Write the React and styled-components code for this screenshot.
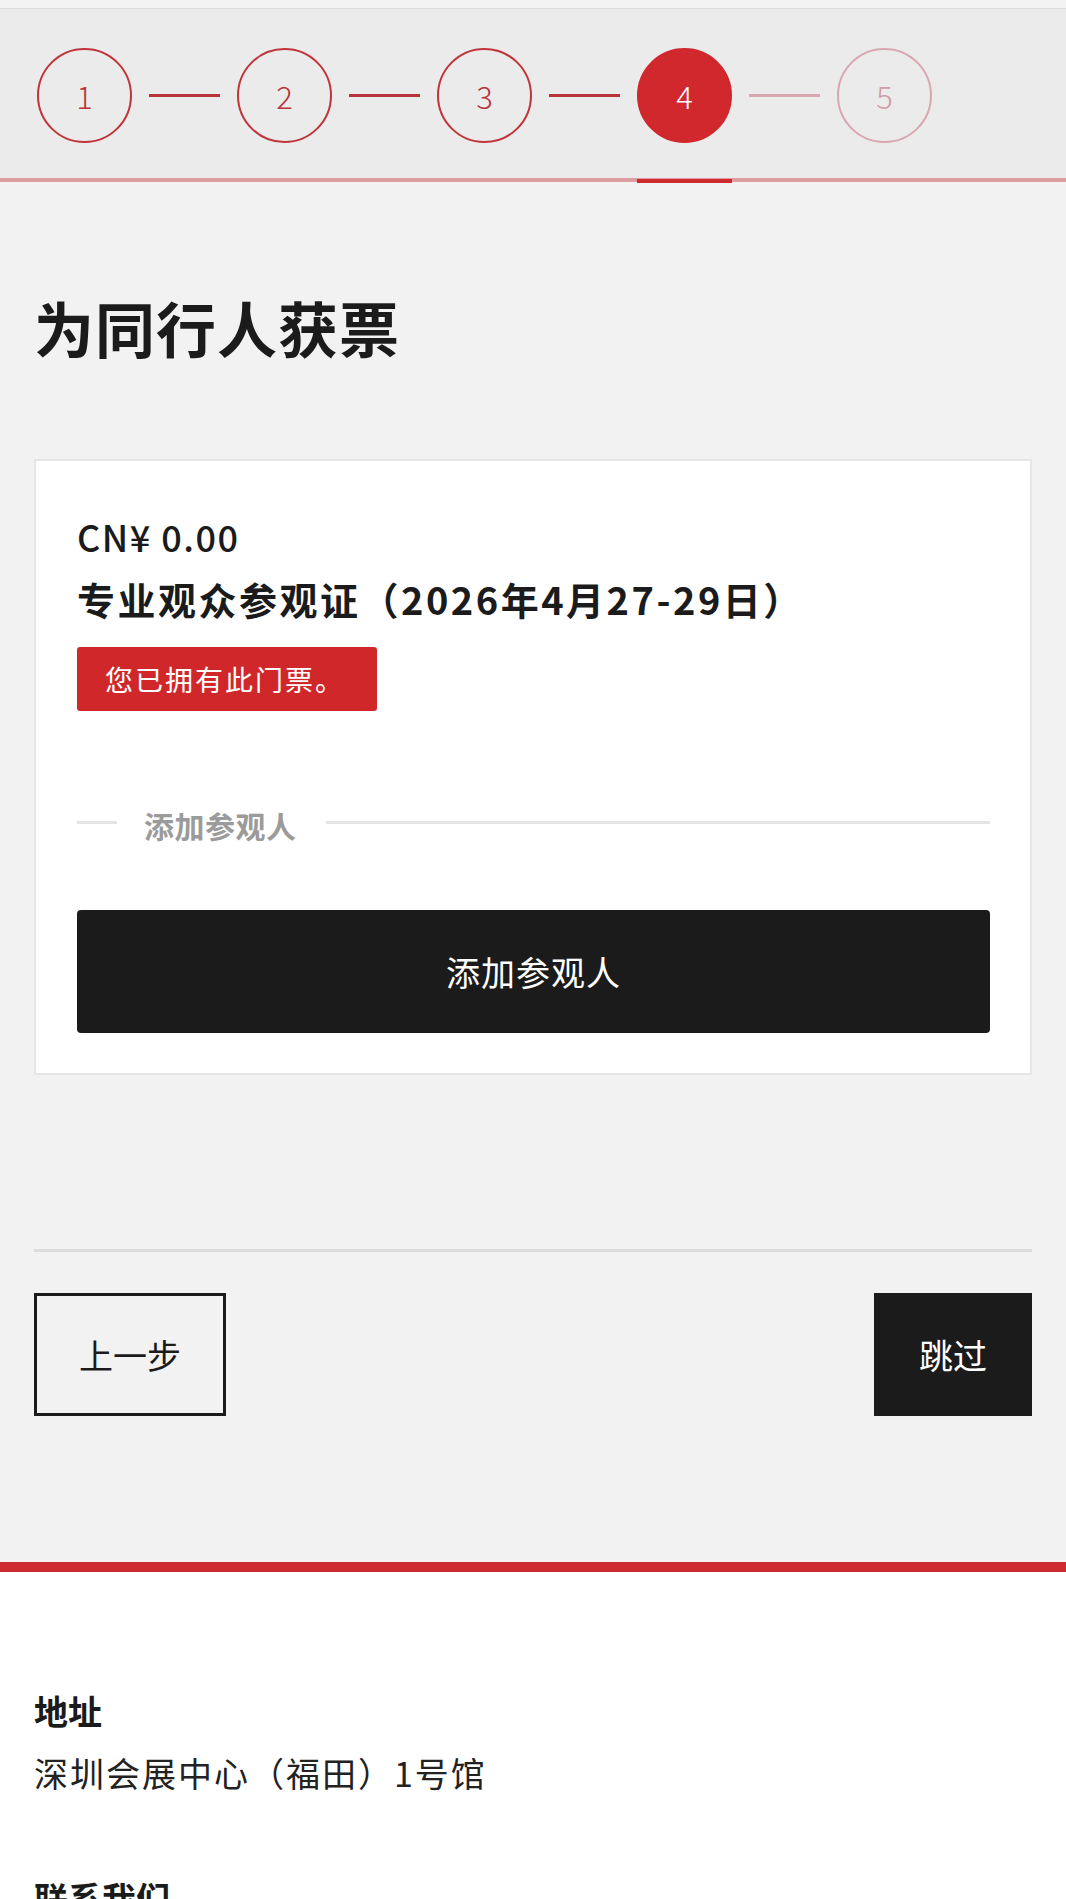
import React from 'react';
import styled, { createGlobalStyle, css } from 'styled-components';

const GlobalStyle = createGlobalStyle`
  body {
    margin: 0;
    background: #f2f2f2;
    font-family: "Noto Sans CJK SC", "Noto Sans", sans-serif;
    color: #1b1b1b;
  }
`;

const TopStrip = styled.div`
  height: 8px;
  background: #f3f3f3;
  border-bottom: 1px solid #dcdcdc;
`;

const Stepper = styled.div`
  display: flex;
  align-items: center;
  background: #ebebeb;
  padding: 39px 0 35px 37px;
  border-bottom: 4px solid #dc9ea3;
`;

const Step = styled.div`
  position: relative;
  box-sizing: border-box;
  width: 95px;
  height: 95px;
  border-radius: 50%;
  display: flex;
  align-items: center;
  justify-content: center;
  font-size: 31px;
  font-weight: 300;
  border: 2px solid ${p => (p.$pending ? '#d9a7b0' : '#c0343a')};
  color: ${p => (p.$pending ? '#d39aa5' : '#b8343a')};
  ${p => p.$active && css`
    background: #d0282c;
    border-color: #d0282c;
    color: #fff;
    &::after {
      content: '';
      position: absolute;
      left: -2px;
      right: -2px;
      bottom: -42px;
      height: 4px;
      background: #cf2a2e;
    }
  `}
`;

const Connector = styled.div`
  width: 71px;
  height: 3px;
  margin: 0 17px;
  background: ${p => (p.$pending ? '#d9a7b0' : '#b8343a')};
`;

const Main = styled.main`
  padding: 0 34px;
`;

const Title = styled.h1`
  margin: 109px 0 0;
  font-size: 60px;
  line-height: 72px;
  font-weight: 700;
  letter-spacing: 1px;
  color: #1b1b1b;
`;

const Card = styled.section`
  margin-top: 96px;
  background: #fff;
  border: 2px solid #e6e6e6;
  padding: 52px 40px 40px 41px;
`;

const Price = styled.div`
  font-size: 36px;
  line-height: 47px;
  font-weight: 500;
  letter-spacing: 1.5px;
`;

const TicketName = styled.div`
  margin-top: 15px;
  font-size: 38px;
  line-height: 47px;
  font-weight: 700;
  letter-spacing: 2.5px;
`;

const Badge = styled.div`
  display: inline-flex;
  align-items: center;
  margin-top: 25px;
  height: 64px;
  width: 300px;
  box-sizing: border-box;
  padding-left: 28px;
  background: #d0282a;
  border-radius: 3px;
  color: #fff;
  font-size: 28px;
  letter-spacing: 2px;
`;

const Divider = styled.div`
  display: flex;
  align-items: center;
  margin-top: 91px;
  height: 40px;
`;

const DividerLine = styled.div`
  height: 3px;
  background: #e4e4e4;
  ${p => (p.$short ? 'width: 40px;' : 'flex: 1;')}
`;

const DividerText = styled.span`
  margin: 6px 29px 0 27px;
  font-size: 30px;
  font-weight: 700;
  letter-spacing: 0.5px;
  color: #9b9b9b;
`;

const BlockButton = styled.button`
  display: block;
  width: 100%;
  height: 123px;
  margin-top: 68px;
  border: 0;
  border-radius: 4px;
  background: #1b1b1b;
  color: #fff;
  font-family: inherit;
  font-size: 34px;
  letter-spacing: 1px;
`;

const Rule = styled.hr`
  margin: 174px 0 0;
  border: 0;
  height: 3px;
  background: #dcdcdc;
`;

const NavRow = styled.div`
  display: flex;
  justify-content: space-between;
  margin-top: 41px;
  padding-bottom: 146px;
`;

const NavButton = styled.button`
  height: 123px;
  box-sizing: border-box;
  padding: 0 42px;
  font-family: inherit;
  font-size: 34px;
  border: 3px solid #1b1b1b;
  background: ${p => (p.$dark ? '#1b1b1b' : 'transparent')};
  color: ${p => (p.$dark ? '#fff' : '#1b1b1b')};
`;

const Footer = styled.footer`
  background: #fff;
  border-top: 10px solid #cc2b2f;
  padding: 115px 34px 40px;
`;

const FooterHeading = styled.div`
  font-size: 34px;
  line-height: 48px;
  font-weight: 700;
  margin-top: ${p => p.$gap || 0}px;
`;

const FooterText = styled.div`
  margin-top: 14px;
  font-size: 34px;
  line-height: 48px;
  letter-spacing: 2px;
  color: #222;
`;

const steps = [1, 2, 3, 4, 5];
const current = 4;

export default function App() {
  return (
    <>
      <GlobalStyle />
      <TopStrip />
      <Stepper>
        {steps.map((n, i) => (
          <React.Fragment key={n}>
            {i > 0 && <Connector $pending={n > current} />}
            <Step $active={n === current} $pending={n > current}>{n}</Step>
          </React.Fragment>
        ))}
      </Stepper>

      <Main>
        <Title>为同行人获票</Title>

        <Card>
          <Price>CN¥ 0.00</Price>
          <TicketName>专业观众参观证（2026年4月27-29日）</TicketName>
          <Badge>您已拥有此门票。</Badge>

          <Divider>
            <DividerLine $short />
            <DividerText>添加参观人</DividerText>
            <DividerLine />
          </Divider>

          <BlockButton>添加参观人</BlockButton>
        </Card>

        <Rule />

        <NavRow>
          <NavButton>上一步</NavButton>
          <NavButton $dark>跳过</NavButton>
        </NavRow>
      </Main>

      <Footer>
        <FooterHeading>地址</FooterHeading>
        <FooterText>深圳会展中心（福田）1号馆</FooterText>
        <FooterHeading $gap={77}>联系我们</FooterHeading>
      </Footer>
    </>
  );
}
